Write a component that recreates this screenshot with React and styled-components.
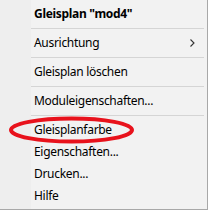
import React from "react";
import styled, { createGlobalStyle } from "styled-components";

const Global = createGlobalStyle`
  html, body { margin: 0; padding: 0; background: #f2f2f2; }
  body { width: 208px; height: 210px; overflow: hidden; }
`;

const Menu = styled.div`
  position: relative;
  box-sizing: border-box;
  width: 208px;
  height: 210px;
  padding: 3px 0 2px 0;
  border-right: 1px solid #a8a8a8;
  border-bottom: 1px solid #a8a8a8;
  background: linear-gradient(to right, #eeeeee 0, #eeeeee 31px, #f2f2f2 31px);
  font-family: "Noto Sans", "Open Sans", sans-serif;
  font-size: 12px;
  letter-spacing: -0.3px;
  color: #000;
  display: flex;
  flex-direction: column;
`;

const Item = styled.div`
  height: 22px;
  line-height: 22px;
  padding-left: 34px;
  padding-right: 12px;
  display: flex;
  align-items: center;
  justify-content: space-between;
  font-weight: ${(p) => (p.$bold ? 700 : 400)};
  white-space: nowrap;
`;

const Separator = styled.div`
  height: 7px;
  display: flex;
  align-items: center;
  padding-left: 31px;
  padding-right: 3px;
  &::after {
    content: "";
    flex: 1;
    height: 1px;
    background: #d5d5d5;
  }
`;

const Chevron = styled.svg`
  width: 5px;
  height: 8px;
`;

const Highlight = styled.svg`
  position: absolute;
  left: 8px;
  top: 114px;
  width: 128px;
  height: 32px;
  pointer-events: none;
`;

export default function App() {
  return (
    <>
      <Global />
      <Menu>
        <Item $bold>Gleisplan "mod4"</Item>
        <Separator />
        <Item>
          Ausrichtung
          <Chevron viewBox="0 0 5 8">
            <path d="M0.5 0.5 L4 4 L0.5 7.5" fill="none" stroke="#333" strokeWidth="1.1" />
          </Chevron>
        </Item>
        <Separator />
        <Item>Gleisplan löschen</Item>
        <Separator />
        <Item>Moduleigenschaften...</Item>
        <Separator />
        <Item>Gleisplanfarbe</Item>
        <Item>Eigenschaften...</Item>
        <Item>Drucken...</Item>
        <Item>Hilfe</Item>
        <Highlight viewBox="0 0 128 32">
          <ellipse cx="63.5" cy="16" rx="60.5" ry="11.5" fill="none" stroke="#e8121c" strokeWidth="4" />
        </Highlight>
      </Menu>
    </>
  );
}
